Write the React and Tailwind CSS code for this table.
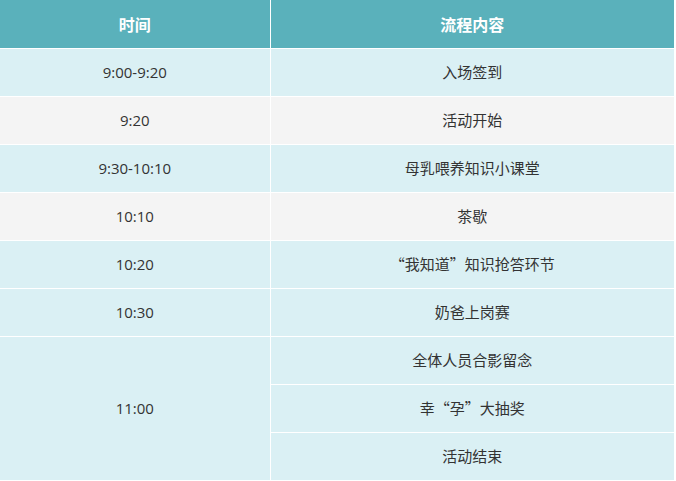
import React from "react"

const rows = [
  { time: "9:00-9:20", items: ["入场签到"], bg: "bg-[#daf0f4]" },
  { time: "9:20", items: ["活动开始"], bg: "bg-[#f4f4f4]" },
  { time: "9:30-10:10", items: ["母乳喂养知识小课堂"], bg: "bg-[#daf0f4]" },
  { time: "10:10", items: ["茶歇"], bg: "bg-[#f4f4f4]" },
  { time: "10:20", items: ["“我知道”知识抢答环节"], bg: "bg-[#daf0f4]" },
  { time: "10:30", items: ["奶爸上岗赛"], bg: "bg-[#daf0f4]" },
  { time: "11:00", items: ["全体人员合影留念", "幸“孕”大抽奖", "活动结束"], bg: "bg-[#daf0f4]" },
]

const cjk = { fontFamily: '"Noto Sans CJK SC", "Noto Sans", sans-serif' }
const latin = { fontFamily: '"Open Sans", "Noto Sans CJK SC", sans-serif' }

export default function App() {
  return (
    <div className="w-[676px] h-[481px] overflow-hidden bg-white" style={cjk}>
      <table className="w-[675px] border-collapse table-fixed text-[15px] text-[#333]">
        <colgroup>
          <col className="w-[270px]" />
          <col />
        </colgroup>
        <thead>
          <tr className="h-[48px] bg-[#5ab1bb] text-white text-[16px] font-bold">
            <th className="border-r border-white">时间</th>
            <th className="border-r border-white">流程内容</th>
          </tr>
        </thead>
        <tbody>
          {rows.map((row) =>
            row.items.map((item, i) => (
              <tr key={row.time + i} className={`h-[48px] ${row.bg}`}>
                {i === 0 && (
                  <td
                    rowSpan={row.items.length}
                    className="border border-white border-l-0 text-center"
                    style={latin}
                  >
                    {row.time}
                  </td>
                )}
                <td className="border border-white text-center">{item}</td>
              </tr>
            ))
          )}
        </tbody>
      </table>
    </div>
  )
}
